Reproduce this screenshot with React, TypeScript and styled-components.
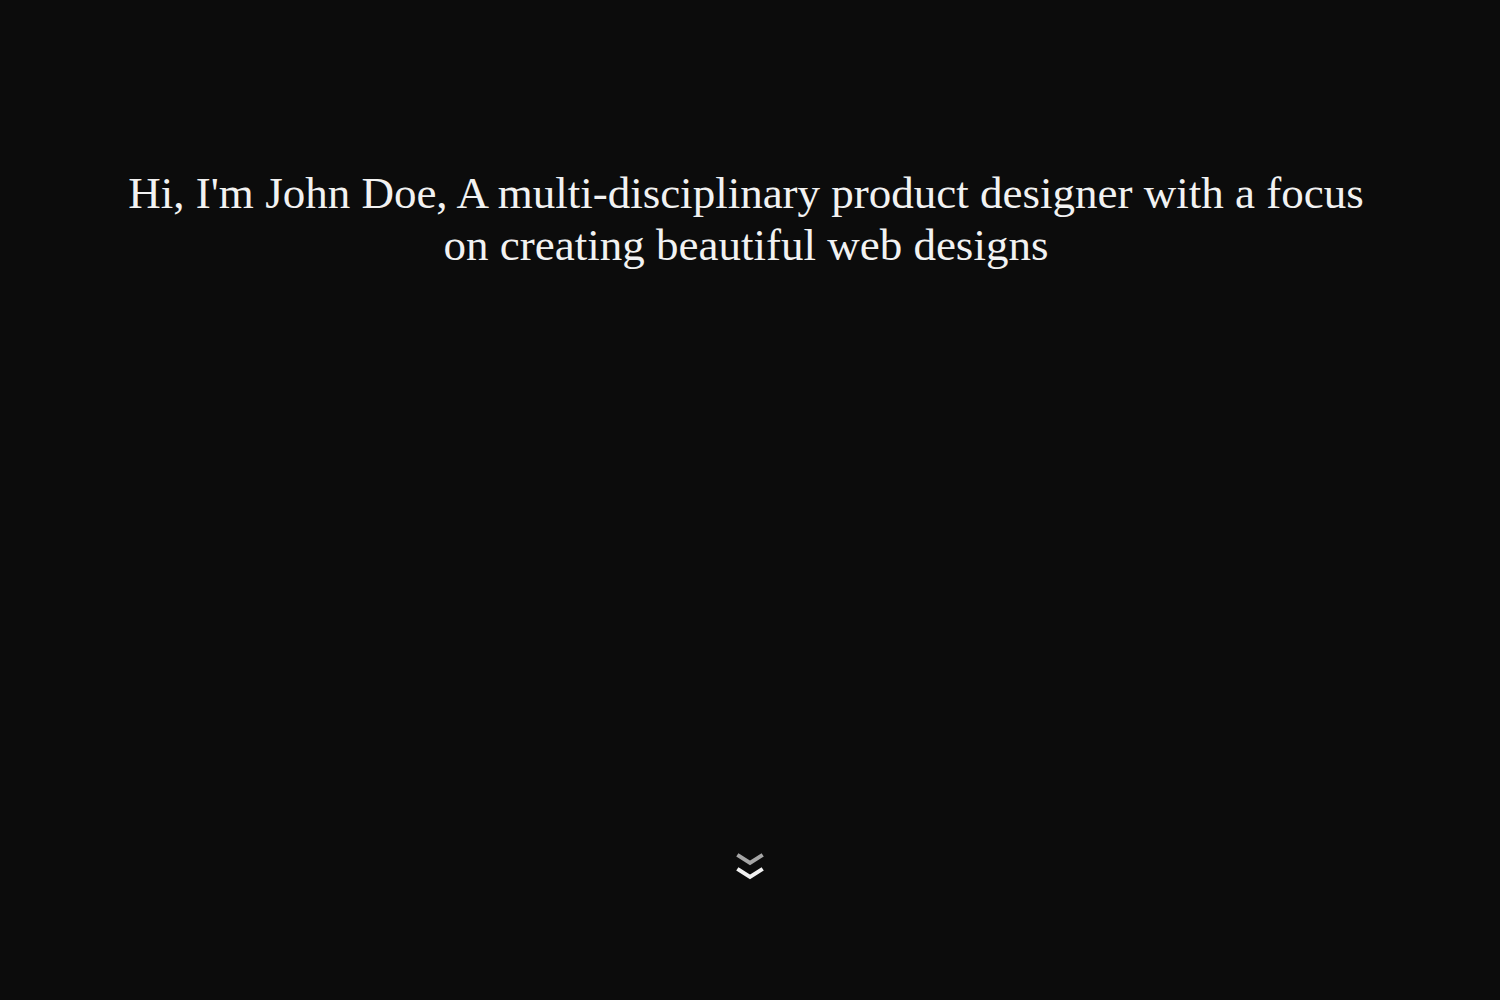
import React from "react";
import styled, { createGlobalStyle } from "styled-components";

const Global = createGlobalStyle`
  html, body { margin: 0; padding: 0; background: #0c0c0c; }
  #root { min-height: 100vh; }
`;

const Hero = styled.section`
  height: 1000px;
  box-sizing: border-box;
  display: flex;
  flex-direction: column;
  align-items: center;
  justify-content: space-between;
  padding: 167px 120px 117px;
  background: #0c0c0c;
`;

const Headline = styled.h1`
  margin: 0 8px 0 0;
  max-width: 1250px;
  font-family: "Liberation Serif", "DejaVu Serif", serif;
  font-weight: 400;
  font-size: 45px;
  line-height: 52px;
  letter-spacing: 0;
  text-align: center;
  color: #f2f2f2;
`;

const ScrollHint = styled.a`
  display: flex;
  width: 32px;
  height: 32px;
  align-items: center;
  justify-content: center;
`;

const Chevrons = () => (
  <svg width="32" height="32" viewBox="0 0 32 32" fill="none" strokeWidth="4" strokeLinecap="square" strokeLinejoin="miter">
    <path d="M5 5 L16 12 L27 5" stroke="#a6a6a6" />
    <path d="M5 19 L16 26 L27 19" stroke="#f2f2f2" />
  </svg>
);

export default function App() {
  return (
    <>
      <Global />
      <Hero>
        <Headline>
          Hi, I'm John Doe, A multi-disciplinary product designer with a focus on creating beautiful web designs
        </Headline>
        <ScrollHint href="#" aria-label="Scroll down">
          <Chevrons />
        </ScrollHint>
      </Hero>
    </>
  );
}
